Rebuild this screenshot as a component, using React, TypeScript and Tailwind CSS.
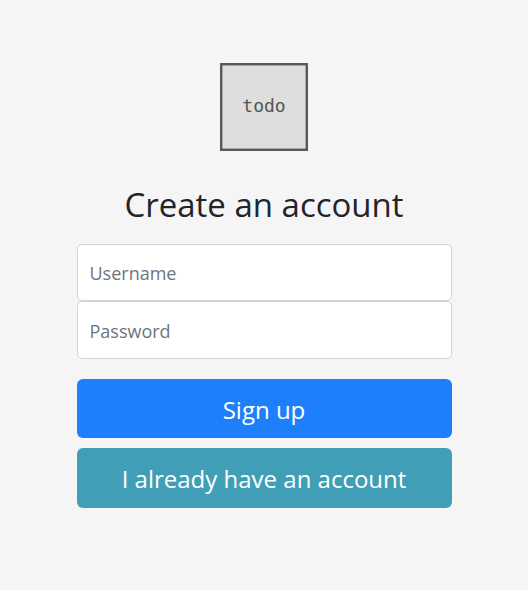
import React from "react";

const fieldClass =
  "block w-full rounded-[5px] border border-[#ced4da] bg-white px-3 pt-px text-[18px] leading-6 text-[#212529] placeholder:text-[#6c757d] outline-none focus:border-[#86b7fe]";
const buttonClass =
  "block w-full rounded-[6px] pt-0.5 text-center text-[24px] leading-8 text-white";

function Logo() {
  return (
    <svg width="88" height="88" viewBox="0 0 88 88" role="img" aria-label="todo">
      <rect x="1.2" y="1.2" width="85.6" height="85.6" fill="#dedede" stroke="#585858" strokeWidth="2.4" />
      <text
        x="44"
        y="49"
        textAnchor="middle"
        fontSize="18"
        fill="#555555"
        fontFamily="'DejaVu Sans Mono', monospace"
      >
        todo
      </text>
    </svg>
  );
}

export default function App() {
  return (
    <main className="flex min-h-screen items-start justify-center bg-[#f5f5f5] px-4 pt-[63px] pb-20 font-['Open_Sans','Noto_Sans',sans-serif]">
      <form className="flex w-full max-w-[375px] flex-col items-center" onSubmit={(e) => e.preventDefault()}>
        <Logo />
        <h1 className="mt-[31px] mb-[17px] text-[33px] leading-[45px] text-[#212529]">Create an account</h1>
        <input id="username" type="text" aria-label="Username" placeholder="Username" className={`${fieldClass} h-[57px]`} />
        <input id="password" type="password" aria-label="Password" placeholder="Password" className={`${fieldClass} h-[58px]`} />
        <button type="submit" className={`${buttonClass} mt-5 h-[59px] bg-[#1e7ffb]`}>Sign up</button>
        <button type="button" className={`${buttonClass} mt-[10px] h-[60px] bg-[#409fb7]`}>I already have an account</button>
      </form>
    </main>
  );
}
